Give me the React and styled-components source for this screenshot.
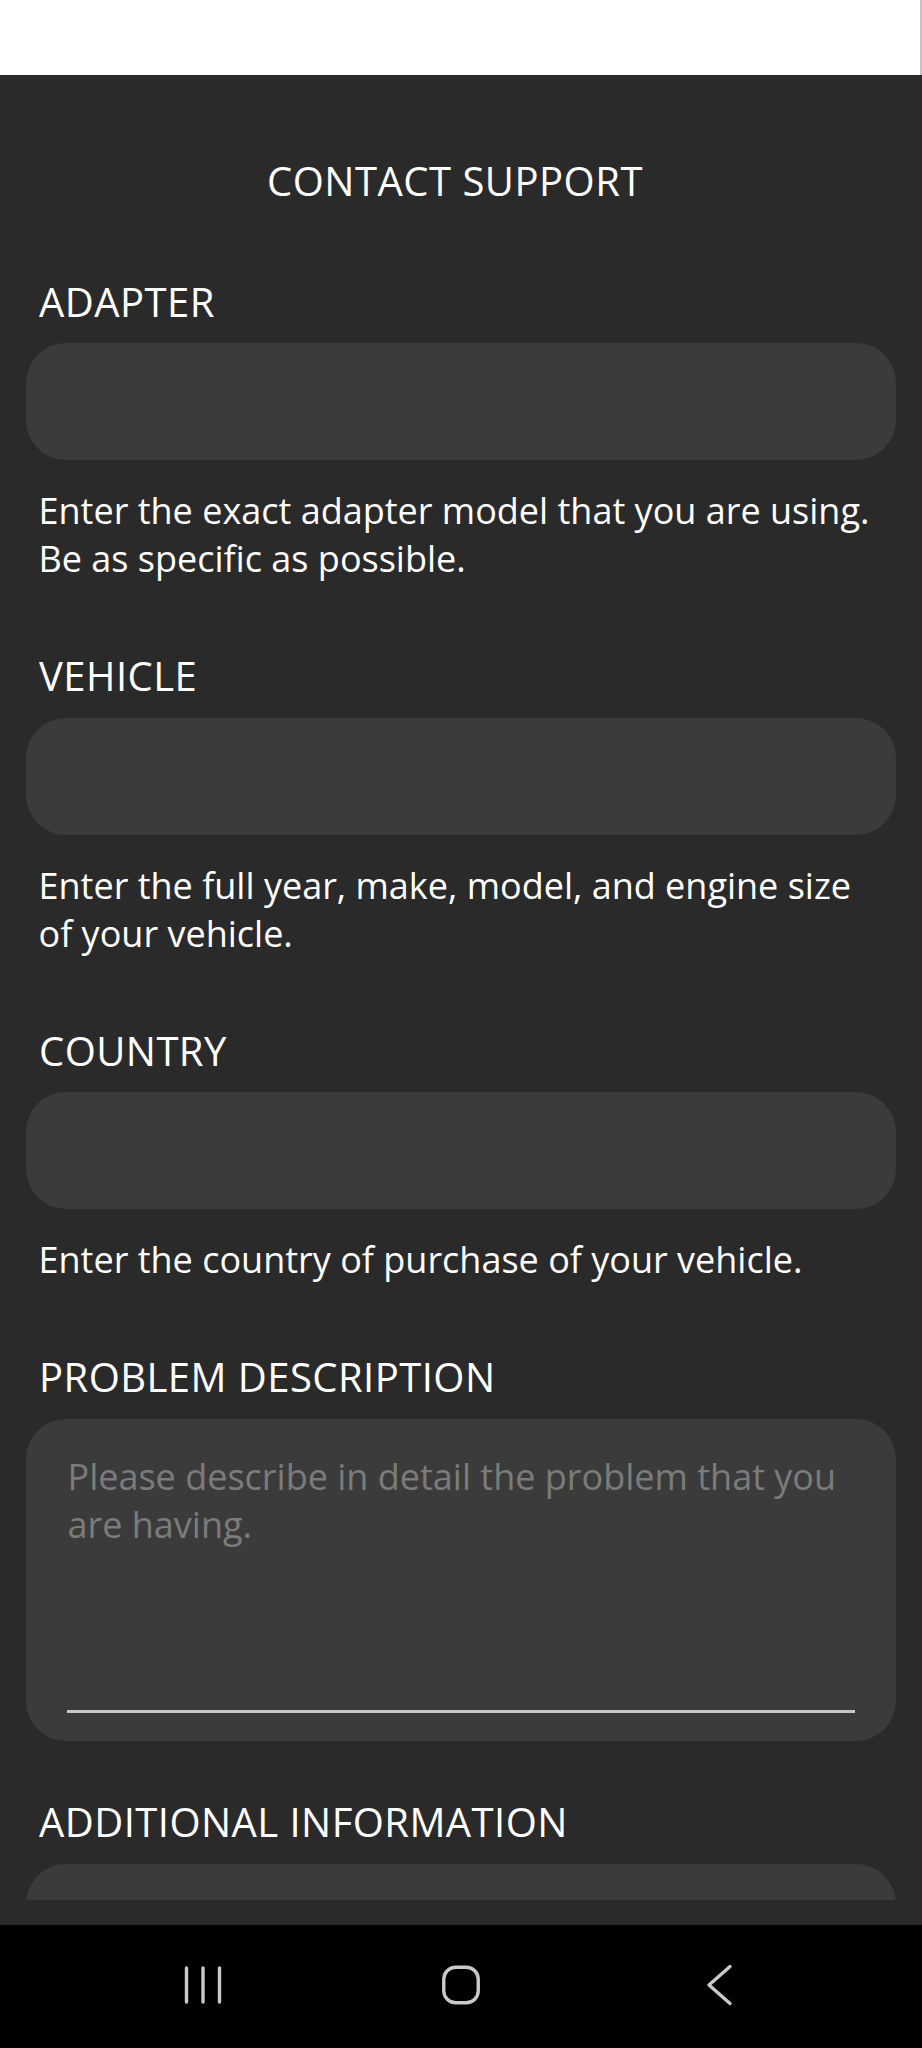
import React from "react";
import styled, { createGlobalStyle } from "styled-components";

const GlobalStyle = createGlobalStyle`
  html, body {
    margin: 0;
    padding: 0;
    background: #2a2a2a;
  }
  body {
    font-family: "Open Sans", "Noto Sans", sans-serif;
    -webkit-font-smoothing: antialiased;
  }
  * { box-sizing: border-box; }
`;

const Screen = styled.div`
  width: 922px;
  height: 2048px;
  display: flex;
  flex-direction: column;
  overflow: hidden;
`;

const StatusArea = styled.div`
  height: 75px;
  flex: none;
  background: #ffffff;
  border-right: 2px solid #c4c4c4;
`;

const Main = styled.main`
  flex: 1;
  display: flex;
  flex-direction: column;
  background: #2a2a2a;
  padding-bottom: 25px;
`;

const Scroll = styled.div`
  height: 1825px;
  overflow: hidden;
  display: flex;
  flex-direction: column;
  padding-top: 77.5px;
`;

const Title = styled.h1`
  margin: 0;
  padding-right: 12px;
  font-size: 40px;
  line-height: 56px;
  font-weight: 400;
  letter-spacing: 0.5px;
  color: #ffffff;
  text-align: center;
`;

const Field = styled.section`
  display: flex;
  flex-direction: column;
  margin-top: ${(p) => (p.$tight ? "53.5px" : "65px")};
  padding: 0 26px;
`;

const Label = styled.label`
  font-size: 40px;
  line-height: 56px;
  font-weight: 400;
  letter-spacing: 0.45px;
  color: #ffffff;
  padding-left: 13px;
`;

const InputBox = styled.div`
  margin-top: 13.5px;
  height: 117px;
  border-radius: 40px;
  background: #3b3b3b;
  flex: none;
`;

const Help = styled.p`
  margin: 27px 0 0;
  padding-left: 12.5px;
  font-size: 36px;
  line-height: 48px;
  color: #ffffff;
  white-space: nowrap;
`;

const TextAreaBox = styled.div`
  margin-top: 13.5px;
  height: 322px;
  border-radius: 40px;
  background: #3b3b3b;
  padding: 34px 41px 28px;
  display: flex;
  flex-direction: column;
  flex: none;
`;

const Placeholder = styled.div`
  font-size: 36px;
  line-height: 48px;
  color: #7b7b7b;
  margin-left: 0.5px;
  flex: 1;
`;

const Underline = styled.div`
  height: 2.5px;
  background: #c8c8c8;
`;

const NavBar = styled.nav`
  height: 123px;
  flex: none;
  background: #000000;
  display: flex;
  align-items: center;
  justify-content: center;
  gap: 214.5px;
  padding-bottom: 3px;
`;

const NavSlot = styled.div`
  width: 44px;
  height: 44px;
  display: flex;
  align-items: center;
  justify-content: center;
  svg { display: block; }
`;

const iconStroke = "#c9c9c9";

const RecentsIcon = () => (
  <svg width="44" height="44" viewBox="0 0 44 44" fill="none">
    <g stroke={iconStroke} strokeWidth="3.4" strokeLinecap="round">
      <line x1="5.5" y1="5" x2="5.5" y2="39" />
      <line x1="22" y1="5" x2="22" y2="39" />
      <line x1="38.5" y1="5" x2="38.5" y2="39" />
    </g>
  </svg>
);

const HomeIcon = () => (
  <svg width="44" height="44" viewBox="0 0 44 44" fill="none">
    <rect
      x="4.75"
      y="4.25"
      width="34.5"
      height="35.5"
      rx="12"
      stroke={iconStroke}
      strokeWidth="3.4"
    />
  </svg>
);

const BackIcon = () => (
  <svg width="44" height="44" viewBox="0 0 44 44" fill="none">
    <polyline
      points="32,3.5 11,22 32,40.5"
      stroke={iconStroke}
      strokeWidth="3.4"
      strokeLinecap="round"
      strokeLinejoin="round"
    />
  </svg>
);

const fields = [
  {
    label: "ADAPTER",
    help: ["Enter the exact adapter model that you are using.", "Be as specific as possible."],
  },
  {
    label: "VEHICLE",
    help: ["Enter the full year, make, model, and engine size", "of your vehicle."],
  },
  {
    label: "COUNTRY",
    help: ["Enter the country of purchase of your vehicle."],
  },
];

export default function App() {
  return (
    <>
      <GlobalStyle />
      <Screen>
        <StatusArea />
        <Main>
          <Scroll>
            <Title>CONTACT SUPPORT</Title>
            {fields.map((f) => (
              <Field key={f.label}>
                <Label>{f.label}</Label>
                <InputBox />
                <Help>
                  {f.help.map((line, i) => (
                    <React.Fragment key={i}>
                      {i > 0 && <br />}
                      {line}
                    </React.Fragment>
                  ))}
                </Help>
              </Field>
            ))}
            <Field>
              <Label>PROBLEM DESCRIPTION</Label>
              <TextAreaBox>
                <Placeholder>
                  Please describe in detail the problem that you
                  <br />
                  are having.
                </Placeholder>
                <Underline />
              </TextAreaBox>
            </Field>
            <Field $tight>
              <Label>ADDITIONAL INFORMATION</Label>
              <InputBox />
            </Field>
          </Scroll>
        </Main>
        <NavBar>
          <NavSlot>
            <RecentsIcon />
          </NavSlot>
          <NavSlot>
            <HomeIcon />
          </NavSlot>
          <NavSlot>
            <BackIcon />
          </NavSlot>
        </NavBar>
      </Screen>
    </>
  );
}
